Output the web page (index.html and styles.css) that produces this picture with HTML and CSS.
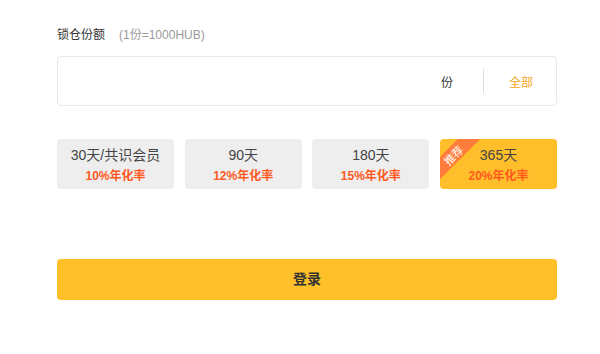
FILE: index.html
```html
<!DOCTYPE html>
<html lang="zh">
<head>
<meta charset="utf-8">
<link rel="stylesheet" href="styles.css">
</head>
<body>
<div class="page">
  <div class="label-row">
    <span class="label">锁仓份额</span>
    <span class="hint">(1份=1000HUB)</span>
  </div>
  <div class="input-box">
    <span class="unit">份</span>
    <span class="divider"></span>
    <span class="all">全部</span>
  </div>
  <div class="cards">
    <div class="card"><div class="days">30天/共识会员</div><div class="rate">10%年化率</div></div>
    <div class="card"><div class="days">90天</div><div class="rate">12%年化率</div></div>
    <div class="card"><div class="days">180天</div><div class="rate">15%年化率</div></div>
    <div class="card active"><div class="ribbon"><span>推荐</span></div><div class="days">365天</div><div class="rate">20%年化率</div></div>
  </div>
  <button class="submit">登录</button>
</div>
</body>
</html>
```
FILE: styles.css
```css
html, body {
  margin: 0;
  padding: 0;
  background: #fff;
  font-family: "Liberation Sans", "Noto Sans CJK SC", sans-serif;
}
.page {
  width: 500px;
  padding: 27px 0 0 57px;
}
.label-row {
  height: 16px;
  line-height: 16px;
  font-size: 12px;
  display: flex;
  align-items: center;
}
.label {
  color: #333;
}
.hint {
  color: #999;
  margin-left: 14px;
}
.input-box {
  margin-top: 13px;
  border: 1px solid #e8e8e8;
  border-radius: 4px;
  display: flex;
  align-items: center;
  justify-content: flex-end;
  box-sizing: border-box;
  height: 50px;
  font-size: 12px;
}
.unit {
  color: #333;
  margin-top: 1px;
}
.divider {
  width: 1px;
  height: 24px;
  background: #ddd;
  margin: 0 25px 0 30px;
}
.all {
  color: #f5a623;
  margin-right: 23px;
}
.cards {
  margin-top: 33px;
  display: grid;
  grid-template-columns: repeat(4, 1fr);
  column-gap: 10.67px;
}
.card {
  position: relative;
  overflow: hidden;
  height: 50px;
  background: #eeeeee;
  border-radius: 4px;
  text-align: center;
  box-sizing: border-box;
  padding-top: 7px;
}
.card.active {
  background: #ffbf2b;
}
.days {
  font-size: 14px;
  line-height: 18px;
  color: #444;
}
.rate {
  margin-top: 4px;
  font-size: 12px;
  line-height: 16px;
  font-weight: bold;
  color: #ff5a1f;
}
.ribbon {
  position: absolute;
  left: -22px;
  top: 8px;
  width: 70px;
  height: 16px;
  background: #ff7d3b;
  transform: rotate(-45deg);
  text-align: center;
  line-height: 16px;
}
.ribbon span {
  color: #fff;
  font-size: 11px;
}
.submit {
  display: block;
  margin-top: 70px;
  width: 500px;
  height: 41px;
  border: none;
  border-radius: 4px;
  background: #ffc02a;
  color: #333;
  font-family: inherit;
  font-size: 14px;
  font-weight: bold;
  padding: 0 0 3px 0;
}
```
